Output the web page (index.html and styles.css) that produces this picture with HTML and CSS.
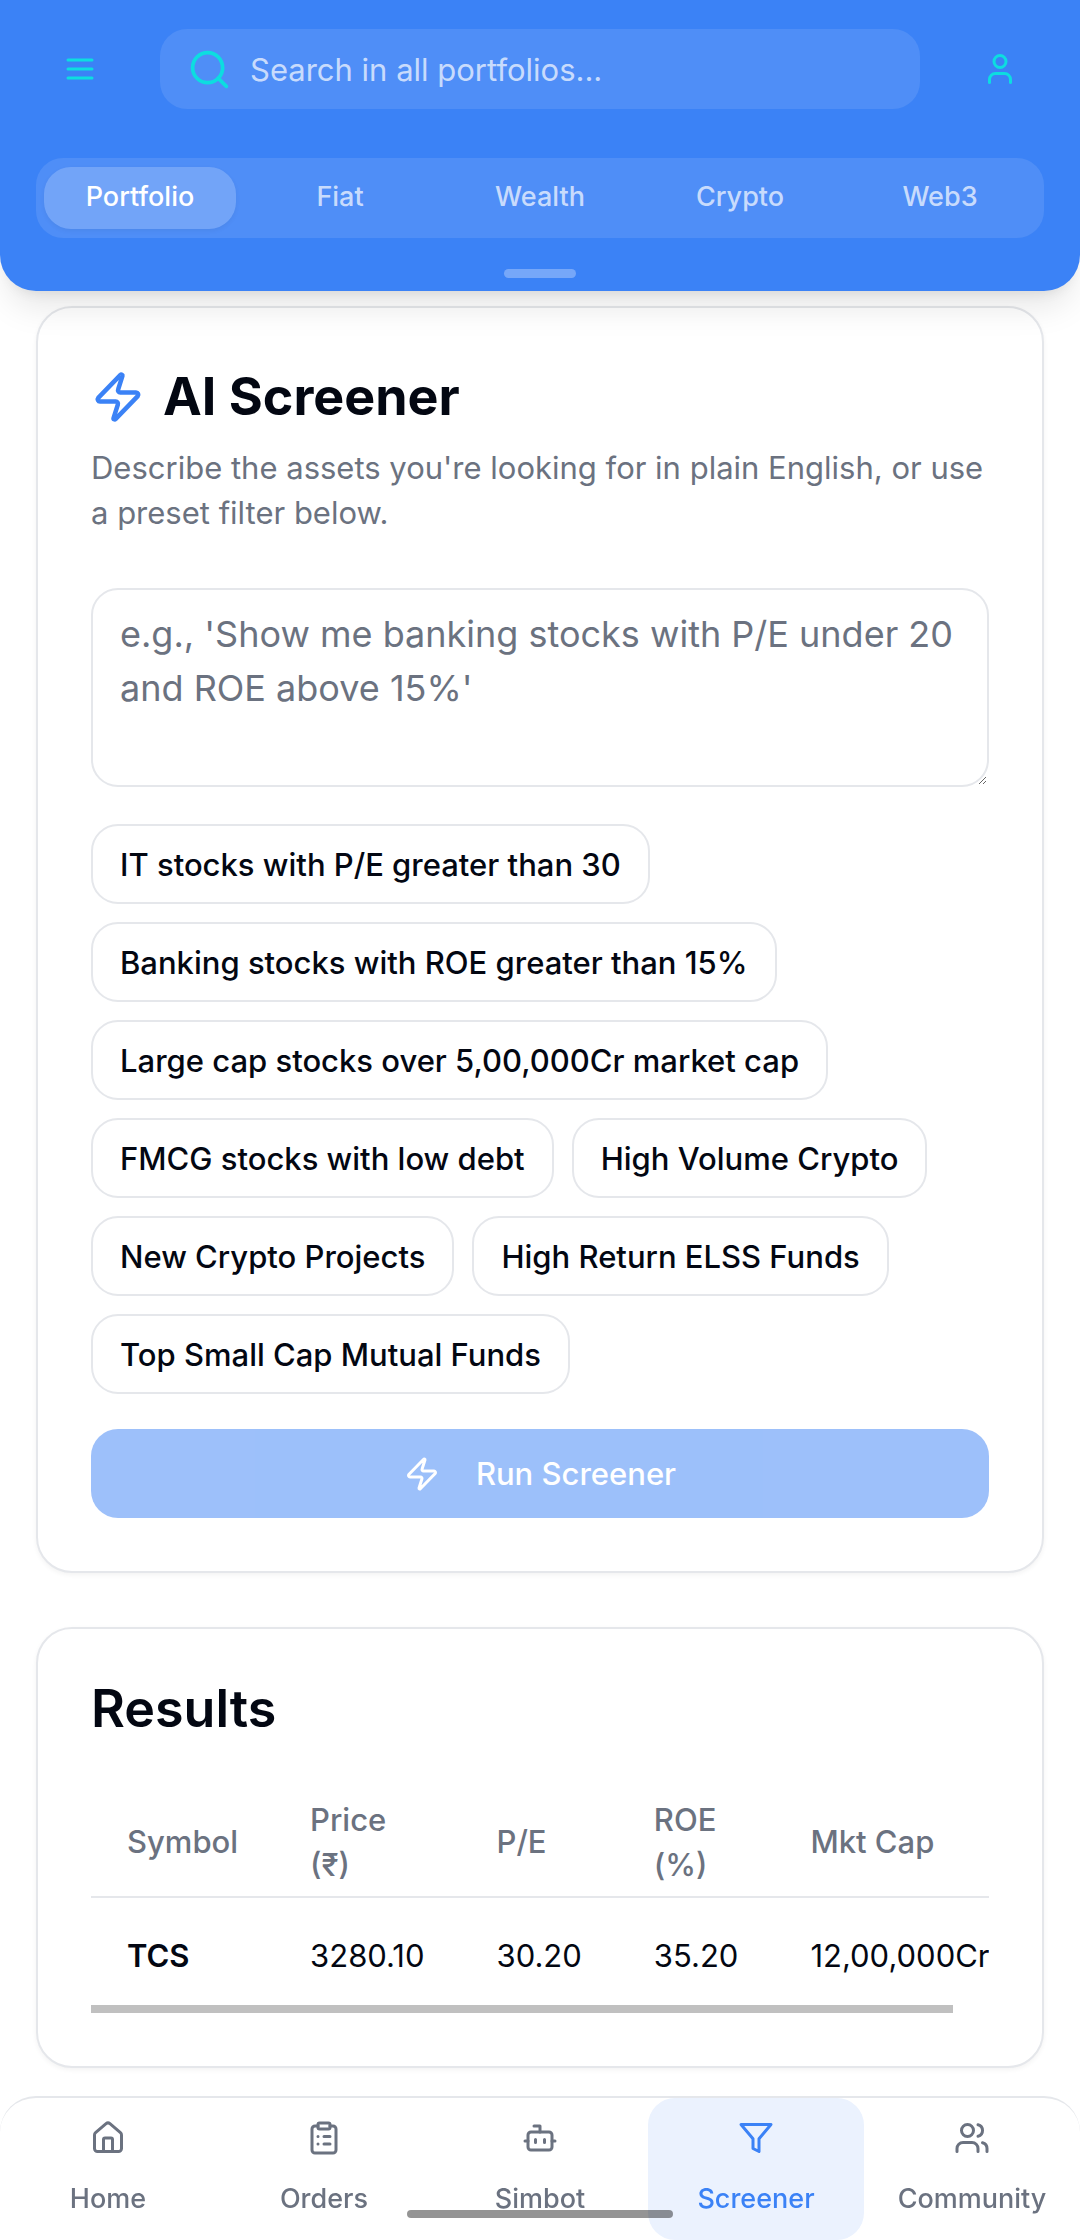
FILE: index.html
```html
<!DOCTYPE html>
<html lang="en">
<head>
    <meta charset="utf-8">
    <title>AI Screener</title>
    <link rel="stylesheet" href="styles.css">
</head>
<body>

<header class="topbar">
    <div class="topbar-row">
        <button class="icon-button" aria-label="Menu">
            <svg class="icon" viewBox="0 0 24 24"><path d="M4 6h16M4 12h16M4 18h16"/></svg>
        </button>
        <label class="search">
            <svg class="icon icon-search" viewBox="0 0 24 24"><circle cx="11" cy="11" r="8"/><path d="m21 21-4.3-4.3"/></svg>
            <input type="search" placeholder="Search in all portfolios..." aria-label="Search in all portfolios">
        </label>
        <button class="icon-button" aria-label="Profile">
            <svg class="icon" viewBox="0 0 24 24"><path d="M19 21v-2a4 4 0 0 0-4-4H9a4 4 0 0 0-4 4v2"/><circle cx="12" cy="7" r="4"/></svg>
        </button>
    </div>
    <div class="tabs" role="tablist">
        <button class="tab active" role="tab" aria-selected="true">Portfolio</button>
        <button class="tab" role="tab">Fiat</button>
        <button class="tab" role="tab">Wealth</button>
        <button class="tab" role="tab">Crypto</button>
        <button class="tab" role="tab">Web3</button>
    </div>
    <div class="handle"></div>
</header>

<main class="content">
    <section class="card">
        <h1 class="card-title title-bold">
            <svg class="icon icon-title" viewBox="0 0 24 24"><path d="M4 14a1 1 0 0 1-.78-1.63l9.9-10.2a.5.5 0 0 1 .86.46l-1.92 6.02A1 1 0 0 0 13 10h7a1 1 0 0 1 .78 1.63l-9.9 10.2a.5.5 0 0 1-.86-.46l1.92-6.02A1 1 0 0 0 11 14z"/></svg>
            AI Screener
        </h1>
        <p class="description">Describe the assets you're looking for in plain English, or use a preset filter below.</p>

        <textarea class="query" rows="3" aria-label="Screener query" placeholder="e.g., 'Show me banking stocks with P/E under 20 and ROE above 15%'"></textarea>

        <div class="presets">
            <button class="chip">IT stocks with P/E greater than 30</button>
            <button class="chip">Banking stocks with ROE greater than 15%</button>
            <button class="chip">Large cap stocks over 5,00,000Cr market cap</button>
            <button class="chip">FMCG stocks with low debt</button>
            <button class="chip">High Volume Crypto</button>
            <button class="chip">New Crypto Projects</button>
            <button class="chip">High Return ELSS Funds</button>
            <button class="chip">Top Small Cap Mutual Funds</button>
        </div>

        <button class="run" disabled>
            <svg class="icon" viewBox="0 0 24 24"><path d="M4 14a1 1 0 0 1-.78-1.63l9.9-10.2a.5.5 0 0 1 .86.46l-1.92 6.02A1 1 0 0 0 13 10h7a1 1 0 0 1 .78 1.63l-9.9 10.2a.5.5 0 0 1-.86-.46l1.92-6.02A1 1 0 0 0 11 14z"/></svg>
            Run Screener
        </button>
    </section>

    <section class="card">
        <h2 class="card-title">Results</h2>
        <div class="results">
            <div class="results-scroll">
                <table>
                    <thead>
                        <tr>
                            <th>Symbol</th>
                            <th>Price (₹)</th>
                            <th>P/E</th>
                            <th>ROE (%)</th>
                            <th class="nowrap">Mkt Cap</th>
                        </tr>
                    </thead>
                    <tbody>
                        <tr>
                            <td class="symbol">TCS</td>
                            <td>3280.10</td>
                            <td>30.20</td>
                            <td>35.20</td>
                            <td>12,00,000Cr</td>
                        </tr>
                    </tbody>
                </table>
            </div>
            <div class="scroll-thumb"></div>
        </div>
    </section>
</main>

<nav class="bottom-nav">
    <a class="nav-item" href="#home">
        <svg class="icon" viewBox="0 0 24 24"><path d="M15 21v-8a1 1 0 0 0-1-1h-4a1 1 0 0 0-1 1v8"/><path d="M3 10a2 2 0 0 1 .709-1.528l7-5.999a2 2 0 0 1 2.582 0l7 5.999A2 2 0 0 1 21 10v9a2 2 0 0 1-2 2H5a2 2 0 0 1-2-2z"/></svg>
        Home
    </a>
    <a class="nav-item" href="#orders">
        <svg class="icon" viewBox="0 0 24 24"><rect width="8" height="4" x="8" y="2" rx="1"/><path d="M16 4h2a2 2 0 0 1 2 2v14a2 2 0 0 1-2 2H6a2 2 0 0 1-2-2V6a2 2 0 0 1 2-2h2M12 11h4M12 16h4M8 11h.01M8 16h.01"/></svg>
        Orders
    </a>
    <a class="nav-item" href="#simbot">
        <svg class="icon" viewBox="0 0 24 24"><path d="M12 8V4H8"/><rect width="16" height="12" x="4" y="8" rx="2"/><path d="M2 14h2M20 14h2M15 13v2M9 13v2"/></svg>
        Simbot
    </a>
    <a class="nav-item active" href="#screener">
        <svg class="icon" viewBox="0 0 24 24"><path d="M22 3H2l8 9.46V19l4 2v-8.54L22 3z"/></svg>
        Screener
    </a>
    <a class="nav-item" href="#community">
        <svg class="icon" viewBox="0 0 24 24"><path d="M16 21v-2a4 4 0 0 0-4-4H6a4 4 0 0 0-4 4v2"/><circle cx="9" cy="7" r="4"/><path d="M22 21v-2a4 4 0 0 0-3-3.87M16 3.13a4 4 0 0 1 0 7.75"/></svg>
        Community
    </a>
    <div class="home-indicator"></div>
</nav>

</body>
</html>
```
FILE: styles.css
```css
* {
  box-sizing: border-box;
}

body {
  margin: 0;
  background: #fff;
  color: #030712;
  font-family: Inter, sans-serif;
  font-size: 31px;
  line-height: 45px;
}

button, input, textarea {
  font: inherit;
  color: inherit;
  margin: 0;
}

button {
  border: none;
  background: none;
  padding: 0;
  font-weight: 500;
  cursor: pointer;
}

.icon {
  width: 36px;
  height: 36px;
  flex: none;
  fill: none;
  stroke: currentColor;
  stroke-width: 2;
  stroke-linecap: round;
  stroke-linejoin: round;
}

/* top bar */
.topbar {
  position: sticky;
  top: 0;
  z-index: 2;
  padding: 29px 36px 13px;
  background: #3b82f6;
  border-radius: 0 0 36px 36px;
  box-shadow: 0 22px 34px -7px rgba(0, 0, 0, 0.1), 0 9px 14px -9px rgba(0, 0, 0, 0.1);
}

.topbar-row {
  display: flex;
  align-items: center;
  gap: 36px;
}

.icon-button {
  display: flex;
  align-items: center;
  justify-content: center;
  width: 88px;
  height: 80px;
  color: #0ddde0;
}

.search {
  flex: 1;
  display: flex;
  align-items: center;
  gap: 18px;
  height: 80px;
  padding: 0 27px;
  border-radius: 27px;
  background: rgba(255, 255, 255, 0.1);
}

.icon-search {
  width: 45px;
  height: 45px;
  color: #0ddde0;
}

.search input {
  flex: 1;
  min-width: 0;
  padding: 0;
  border: none;
  outline: none;
  background: none;
  color: #fff;
}

.search input::placeholder {
  color: rgba(255, 255, 255, 0.7);
}

.tabs {
  display: grid;
  grid-template-columns: repeat(5, 1fr);
  gap: 8px;
  margin-top: 49px;
  padding: 9px 8px;
  border-radius: 27px;
  background: rgba(255, 255, 255, 0.1);
}

.tab {
  height: 62px;
  padding-bottom: 2px;
  border-radius: 27px;
  font-size: 27px;
  line-height: 36px;
  color: rgba(255, 255, 255, 0.7);
}

.tab.active {
  background: rgba(255, 255, 255, 0.2);
  color: #fff;
  box-shadow: 0 2px 5px rgba(0, 0, 0, 0.05);
}

.handle {
  width: 72px;
  height: 9px;
  margin: 31px auto 0;
  border-radius: 5px;
  background: rgba(255, 255, 255, 0.3);
}

/* cards */
.content {
  display: flex;
  flex-direction: column;
  gap: 54px;
  padding: 15px 36px 173px;
}

.card {
  padding: 53px;
  border: 2px solid #e5e7eb;
  border-radius: 36px;
  background: #fff;
  box-shadow: 0 2px 5px rgba(0, 0, 0, 0.05);
}

.card-title {
  display: flex;
  align-items: center;
  gap: 18px;
  margin: 0;
  font-size: 52px;
  line-height: 54px;
  font-weight: 600;
}

.title-bold {
  line-height: 72px;
  font-weight: 700;
}

.icon-title {
  width: 54px;
  height: 54px;
  color: #3b82f6;
}

.description {
  margin: 12px 0 53px;
  color: #6b7280;
}

.query {
  display: block;
  width: 100%;
  height: 199px;
  padding: 17px 27px;
  border: 2px solid #e5e7eb;
  border-radius: 27px;
  background: #fff;
  font-size: 36px;
  line-height: 54px;
  resize: vertical;
}

.query::placeholder {
  color: #6b7280;
}

.presets {
  display: flex;
  flex-wrap: wrap;
  gap: 18px;
  margin: 37px 0 35px;
}

.chip {
  height: 80px;
  padding: 0 27px;
  border: 2px solid #e5e7eb;
  border-radius: 27px;
  background: #fff;
}

.run {
  display: flex;
  align-items: center;
  justify-content: center;
  gap: 36px;
  width: 100%;
  height: 89px;
  border-radius: 27px;
  background: #3b82f6;
  color: #fff;
  opacity: 0.5;
}

/* results */
.results {
  position: relative;
  margin-top: 51px;
}

.results-scroll {
  overflow-x: auto;
  scrollbar-width: none;
}

table {
  width: 100%;
  border-collapse: collapse;
}

th, td {
  padding: 35px 36px;
  text-align: left;
}

th {
  height: 110px;
  padding: 9px 36px;
  border-bottom: 2px solid #e5e7eb;
  font-weight: 500;
  color: #6b7280;
}

.nowrap {
  white-space: nowrap;
}

.symbol {
  font-weight: 600;
}

/* thumb lies over the bottom edge of the table */
.scroll-thumb {
  position: absolute;
  left: 0;
  bottom: 0;
  width: 96%;
  height: 8px;
  background: #c0c0c0;
}

/* bottom navigation */
.bottom-nav {
  position: fixed;
  left: 0;
  right: 0;
  bottom: 0;
  z-index: 2;
  display: grid;
  grid-template-columns: repeat(5, 1fr);
  overflow: hidden;
  border-top: 2px solid #e5e7eb;
  border-radius: 36px 36px 0 0;
  background: #fff;
}

.nav-item {
  display: flex;
  flex-direction: column;
  align-items: center;
  gap: 25px;
  padding: 22px 0 23px;
  border-radius: 27px;
  font-size: 27px;
  line-height: 36px;
  font-weight: 500;
  color: #6b7280;
  text-decoration: none;
}

.nav-item.active {
  background: #ebf2fe;
  color: #3b82f6;
}

.home-indicator {
  position: absolute;
  left: 50%;
  bottom: 22px;
  width: 266px;
  height: 8px;
  border-radius: 4px;
  background: rgba(0, 0, 0, 0.42);
  transform: translateX(-50%);
}
```
